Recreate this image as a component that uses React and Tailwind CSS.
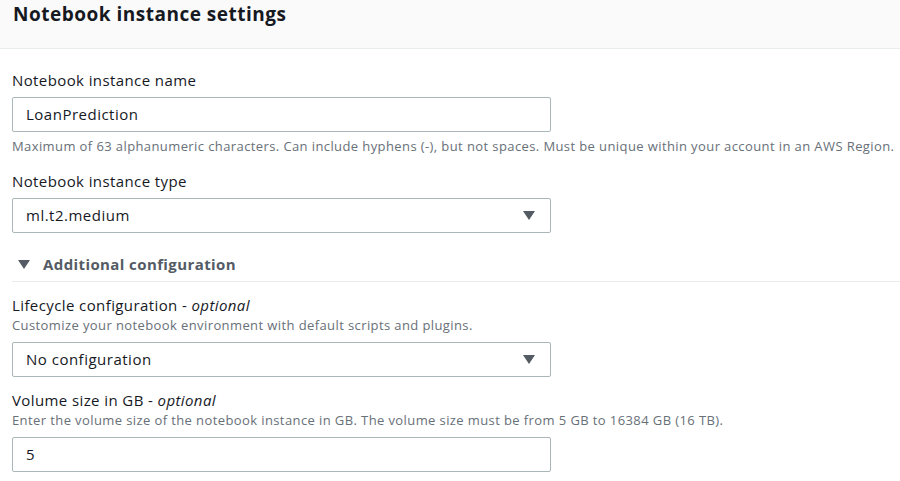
const font = { fontFamily: '"Open Sans", "Noto Sans", sans-serif' }

function Caret({ className }) {
  return (
    <svg width="12" height="9" viewBox="0 0 12 9" className={className}>
      <path d="M0 0 H12 L6 9 Z" fill="#545b64" />
    </svg>
  )
}

function Field({ label, optional, hint, children }) {
  return (
    <div className="flex flex-col">
      <div className="text-[15px] leading-[22px] tracking-[0.4px] text-[#16191f]">
        {label}
        {optional && <span> - <i>optional</i></span>}
      </div>
      {hint && <div className="text-[13px] leading-[18px] tracking-[0.4px] text-[#687078] whitespace-nowrap">{hint}</div>}
      <div className={hint ? "mt-[8px]" : "mt-[6px]"}>{children}</div>
    </div>
  )
}

function TextBox({ value }) {
  return (
    <div className="w-[539px] h-[35px] border border-[#aab7b8] rounded-[2px] flex items-center px-[13px] text-[15px] tracking-[0.5px] text-[#16191f]">
      {value}
    </div>
  )
}

function Select({ value }) {
  return (
    <div className="w-[539px] h-[35px] border border-[#aab7b8] rounded-[2px] flex items-center justify-between pl-[13px] pr-[15px] text-[15px] tracking-[0.5px] text-[#16191f]">
      <span>{value}</span>
      <Caret />
    </div>
  )
}

export default function App() {
  return (
    <div className="w-[900px] h-[481px] bg-white overflow-hidden" style={font}>
      <div className="h-[49px] bg-[#fafafa] border-b border-[#eaeded] px-[13px] pt-[1px]">
        <h2 className="text-[19px] leading-[26px] tracking-[0.5px] font-bold text-[#16191f]">Notebook instance settings</h2>
      </div>
      <div className="pl-[12px] pt-[20px] flex flex-col">
        <Field label="Notebook instance name">
          <TextBox value="LoanPrediction" />
        </Field>
        <div className="text-[13px] leading-[18px] tracking-[0.4px] text-[#687078] mt-[5px] whitespace-nowrap">
          Maximum of 63 alphanumeric characters. Can include hyphens (-), but not spaces. Must be unique within your account in an AWS Region.
        </div>
        <div className="mt-[15px]">
          <Field label="Notebook instance type">
            <Select value="ml.t2.medium" />
          </Field>
        </div>
        <div className="mt-[20px] flex items-center gap-[13px] pl-[6px] text-[15px] tracking-[0.4px] font-bold text-[#545b64] leading-[22px]">
          <Caret />
          <span>Additional configuration</span>
        </div>
        <div className="mt-[6px] border-t border-[#eaeded]" />
        <div className="mt-[12px]">
          <Field label="Lifecycle configuration" optional hint="Customize your notebook environment with default scripts and plugins.">
            <Select value="No configuration" />
          </Field>
        </div>
        <div className="mt-[12px]">
          <Field label="Volume size in GB" optional hint="Enter the volume size of the notebook instance in GB. The volume size must be from 5 GB to 16384 GB (16 TB).">
            <TextBox value="5" />
          </Field>
        </div>
      </div>
    </div>
  )
}
